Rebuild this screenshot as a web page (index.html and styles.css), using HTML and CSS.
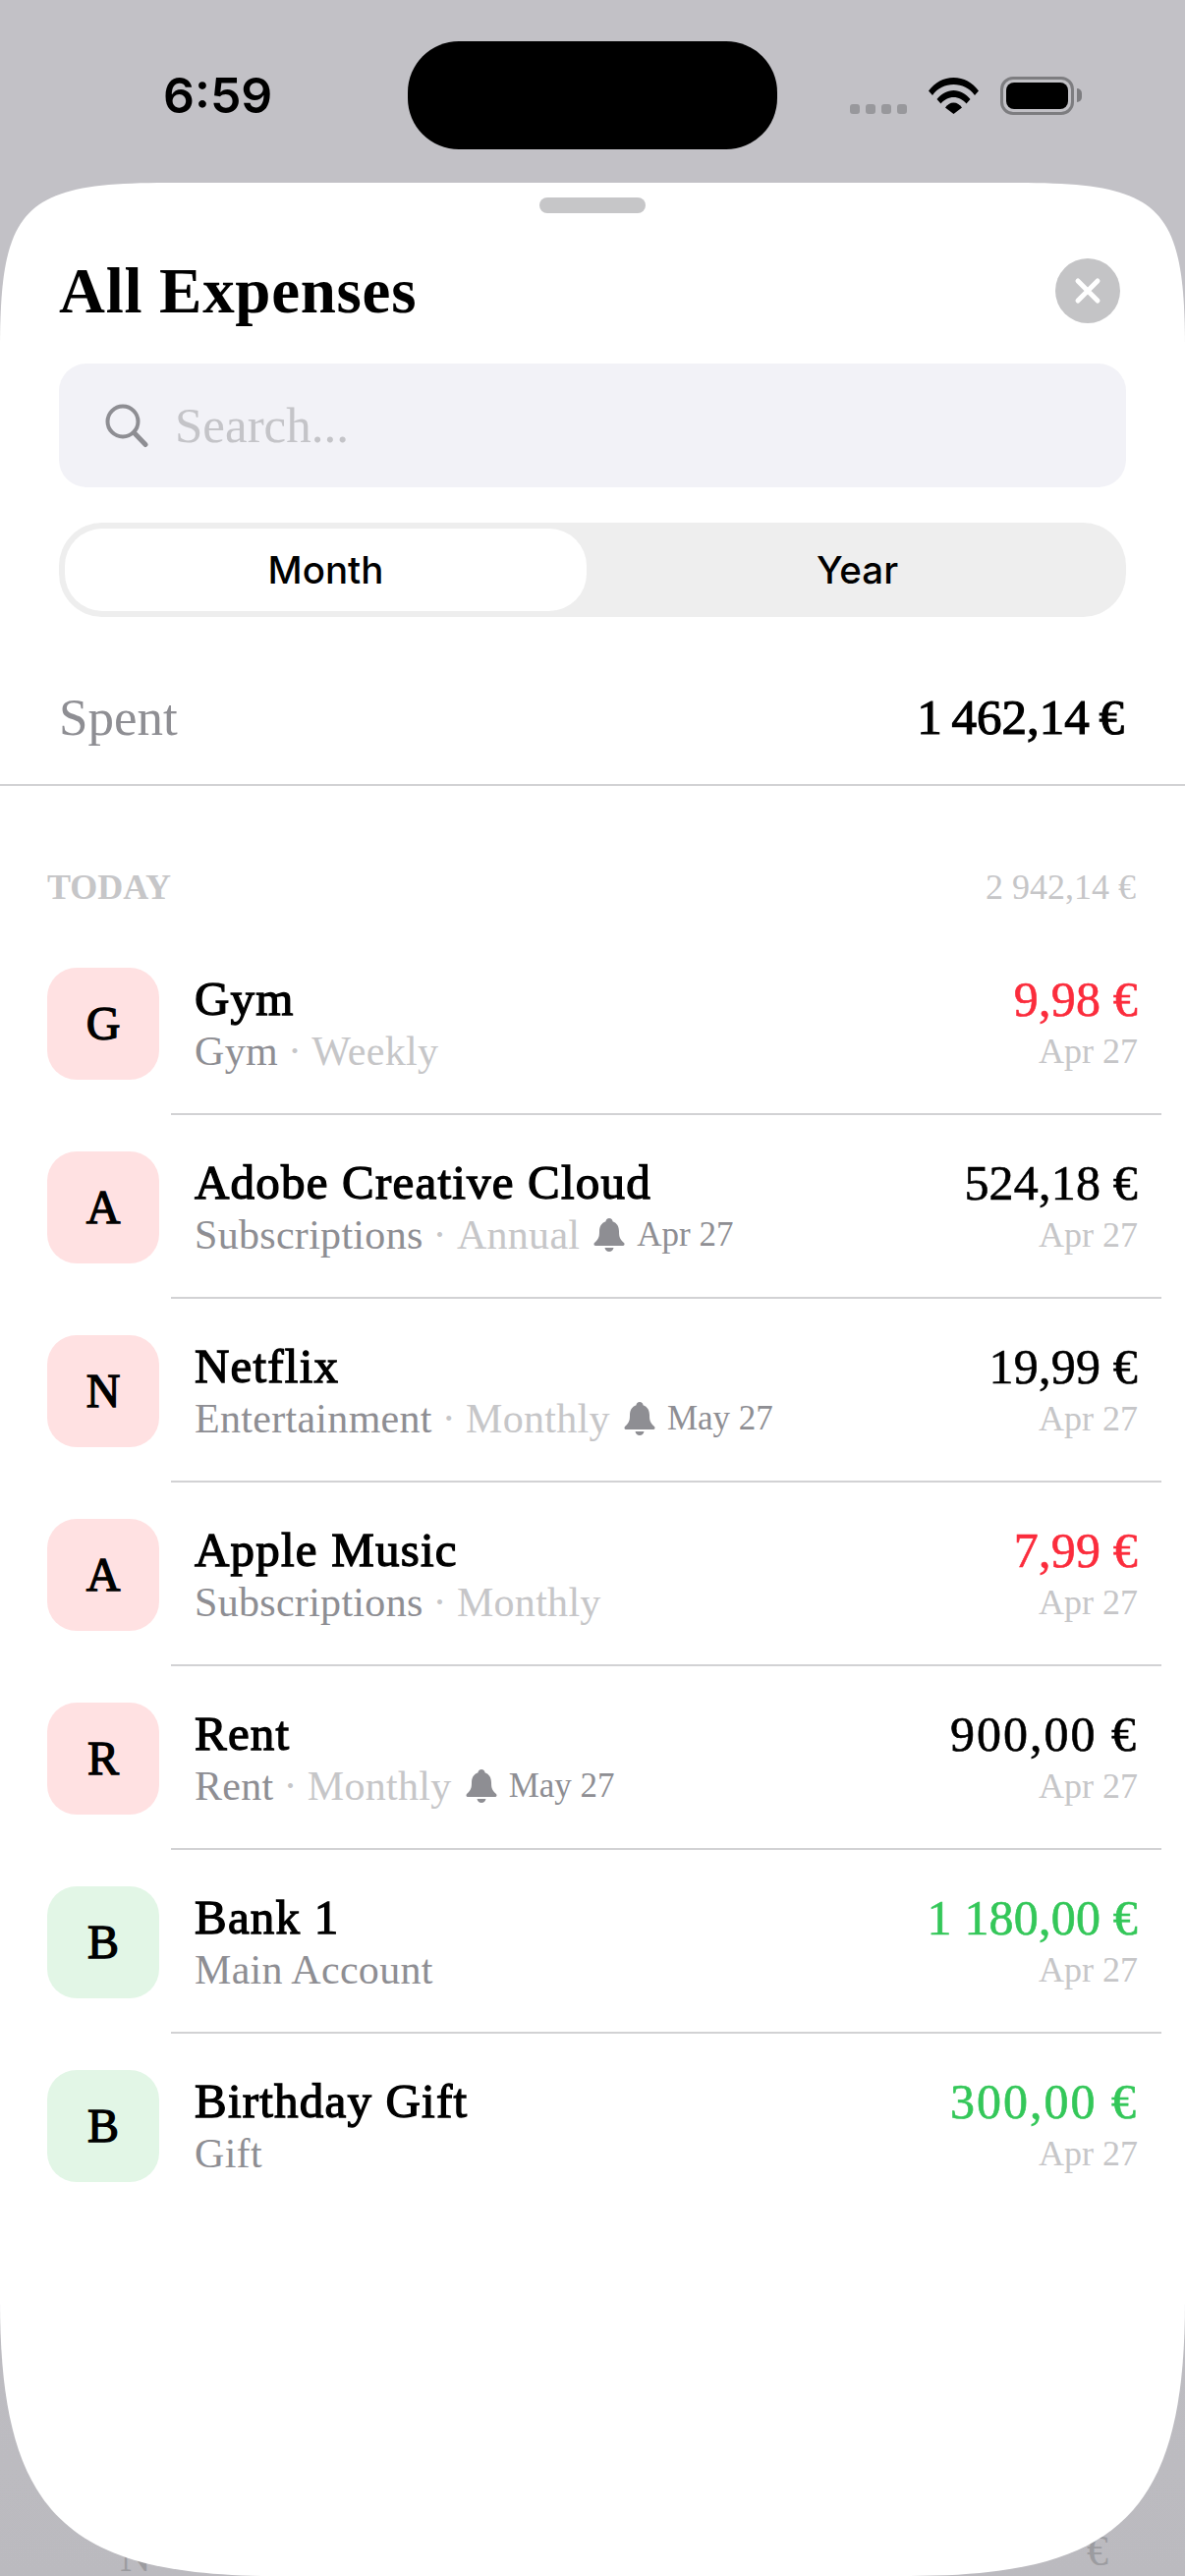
FILE: index.html
```html
<!DOCTYPE html>
<html lang="en">
<head>
  <meta charset="UTF-8">
  <title>All Expenses</title>
  <link rel="stylesheet" href="styles.css">
</head>
<body>
  <div class="page">

    <!-- what is left visible of the screen under the sheet -->
    <div class="ghost-row">
      <span>N</span>
      <span class="ghost-euro">€</span>
    </div>

    <div class="status-bar">
      <div class="status-time">6:59</div>
      <div class="island"></div>
      <div class="status-icons">
        <div class="signal"><i></i><i></i><i></i><i></i></div>
        <svg class="wifi" width="51" height="38" viewBox="0 0 51 38">
          <path d="M0 14.500C6.500 6 15 1 25.500 1S44.500 6 51 14.500L47 19C41.500 11.500 34 8 25.500 8S9.500 11.500 4 19Z"/>
          <path d="M8.500 23C13 17.500 19 14 25.500 14S38 17.500 42.500 23L38.500 27.500C35 23.500 30.500 21 25.500 21S16 23.500 12.500 27.500Z"/>
          <path d="M17 31.500C19 28.500 22 26.500 25.500 26.500S32 28.500 34 31.500L25.500 38Z"/>
        </svg>
        <div class="battery"><div class="battery-level"></div></div>
      </div>
    </div>

    <div class="sheet">
      <div class="handle"></div>

      <div class="sheet-header">
        <h1>All Expenses</h1>
        <div class="close-btn">
          <svg width="30" height="30" viewBox="0 0 30 30">
            <path d="M5 5L25 25M25 5L5 25" fill="none" stroke="#fff" stroke-width="5" stroke-linecap="round"/>
          </svg>
        </div>
      </div>

      <div class="search-box">
        <svg width="46" height="46" viewBox="0 0 46 46">
          <circle cx="19" cy="19" r="15.500" fill="none" stroke="#8e8e93" stroke-width="4"/>
          <path d="M30.500 30.500L42 42.500" fill="none" stroke="#8e8e93" stroke-width="5" stroke-linecap="round"/>
        </svg>
        <span>Search...</span>
      </div>

      <div class="segments">
        <div class="segment active">Month</div>
        <div class="segment year">Year</div>
      </div>

      <div class="spent-row">
        <span class="spent-label">Spent</span>
        <span class="spent-value">1 462,14 €</span>
      </div>

      <div class="day-header">
        <span class="day-name">TODAY</span>
        <span class="day-total">2 942,14 €</span>
      </div>

      <div class="row">
        <div class="letter pink">G</div>
        <div class="row-body">
          <div class="row-left">
            <div class="name">Gym</div>
            <div class="sub">Gym<span class="dot">·</span><span class="repeat">Weekly</span></div>
          </div>
          <div class="row-right">
            <div class="amount red">9,98 €</div>
            <div class="date">Apr 27</div>
          </div>
        </div>
      </div>

      <div class="row">
        <div class="letter pink">A</div>
        <div class="row-body">
          <div class="row-left">
            <div class="name">Adobe Creative Cloud</div>
            <div class="sub">Subscriptions<span class="dot">·</span><span class="repeat">Annual</span>
              <svg class="bell" width="32" height="34" viewBox="0 0 32 34"><path d="M16 0C18 0 19.500 1.500 19.500 3.200C24 4.800 26 8.500 26 13.500C26 19 27 21.500 31 25C32 26 31.500 28 30 28H2C.5 28 0 26 1 25C5 21.500 6 19 6 13.500C6 8.500 8 4.800 12.500 3.200C12.500 1.500 14 0 16 0ZM11.500 30H20.500C20 32.500 18.200 34 16 34S12 32.500 11.500 30Z"/></svg>
              <span class="remind">Apr 27</span></div>
          </div>
          <div class="row-right">
            <div class="amount">524,18 €</div>
            <div class="date">Apr 27</div>
          </div>
        </div>
      </div>

      <div class="row">
        <div class="letter pink">N</div>
        <div class="row-body">
          <div class="row-left">
            <div class="name">Netflix</div>
            <div class="sub">Entertainment<span class="dot">·</span><span class="repeat">Monthly</span>
              <svg class="bell" width="32" height="34" viewBox="0 0 32 34"><path d="M16 0C18 0 19.500 1.500 19.500 3.200C24 4.800 26 8.500 26 13.500C26 19 27 21.500 31 25C32 26 31.500 28 30 28H2C.5 28 0 26 1 25C5 21.500 6 19 6 13.500C6 8.500 8 4.800 12.500 3.200C12.500 1.500 14 0 16 0ZM11.500 30H20.500C20 32.500 18.200 34 16 34S12 32.500 11.500 30Z"/></svg>
              <span class="remind">May 27</span></div>
          </div>
          <div class="row-right">
            <div class="amount">19,99 €</div>
            <div class="date">Apr 27</div>
          </div>
        </div>
      </div>

      <div class="row">
        <div class="letter pink">A</div>
        <div class="row-body">
          <div class="row-left">
            <div class="name">Apple Music</div>
            <div class="sub">Subscriptions<span class="dot">·</span><span class="repeat">Monthly</span></div>
          </div>
          <div class="row-right">
            <div class="amount red">7,99 €</div>
            <div class="date">Apr 27</div>
          </div>
        </div>
      </div>

      <div class="row">
        <div class="letter pink">R</div>
        <div class="row-body">
          <div class="row-left">
            <div class="name">Rent</div>
            <div class="sub">Rent<span class="dot">·</span><span class="repeat">Monthly</span>
              <svg class="bell" width="32" height="34" viewBox="0 0 32 34"><path d="M16 0C18 0 19.500 1.500 19.500 3.200C24 4.800 26 8.500 26 13.500C26 19 27 21.500 31 25C32 26 31.500 28 30 28H2C.5 28 0 26 1 25C5 21.500 6 19 6 13.500C6 8.500 8 4.800 12.500 3.200C12.500 1.500 14 0 16 0ZM11.500 30H20.500C20 32.500 18.200 34 16 34S12 32.500 11.500 30Z"/></svg>
              <span class="remind">May 27</span></div>
          </div>
          <div class="row-right">
            <div class="amount wide">900,00 €</div>
            <div class="date">Apr 27</div>
          </div>
        </div>
      </div>

      <div class="row">
        <div class="letter mint">B</div>
        <div class="row-body">
          <div class="row-left">
            <div class="name">Bank 1</div>
            <div class="sub">Main Account</div>
          </div>
          <div class="row-right">
            <div class="amount green">1 180,00 €</div>
            <div class="date">Apr 27</div>
          </div>
        </div>
      </div>

      <div class="row last">
        <div class="letter mint">B</div>
        <div class="row-body">
          <div class="row-left">
            <div class="name">Birthday Gift</div>
            <div class="sub">Gift</div>
          </div>
          <div class="row-right">
            <div class="amount green wide">300,00 €</div>
            <div class="date">Apr 27</div>
          </div>
        </div>
      </div>
    </div>
  </div>
</body>
</html>
```

FILE: styles.css
```css
* {
  box-sizing: border-box;
}
body {
  margin: 0;
  font-family: "Liberation Serif", serif;
  color: #000;
  background: #c2c1c6;
}
.page {
  position: relative;
  width: 1206px;
  height: 2622px;
  overflow: hidden;
  background: linear-gradient(#c2c1c6 0, #c2c1c6 70%, #bbbabf 100%);
}
.ghost-row {
  position: absolute;
  left: 122px;
  right: 78px;
  bottom: -6px;
  display: flex;
  justify-content: space-between;
  font-size: 44px;
  color: #9c9ca0;
}
.ghost-euro {
  position: relative;
  top: -6px;
}

/* status bar */
.status-bar {
  display: flex;
  height: 186px;
}
.status-time {
  width: 415px;
  padding: 69px 0 0 166px;
  font-family: "Inter", sans-serif;
  font-weight: 600;
  font-size: 50px;
  line-height: 56px;
}
.island {
  width: 376px;
  height: 110px;
  margin-top: 42px;
  background: #000;
  border-radius: 52px;
}
.status-icons {
  display: flex;
  align-items: flex-start;
  padding: 78px 0 0 74px;
}
.signal {
  display: flex;
  gap: 6px;
  margin-top: 28px;
}
.signal i {
  width: 10px;
  height: 10px;
  background: #98989c;
  border-radius: 3px;
}
.wifi {
  margin-left: 22px;
}
.battery {
  position: relative;
  width: 75px;
  height: 39px;
  margin-left: 22px;
  padding: 3px;
  border: 3px solid #7d7d80;
  border-radius: 13px;
}
.battery::after {
  content: "";
  position: absolute;
  left: 75px;
  top: 9px;
  width: 5px;
  height: 14px;
  background: #7d7d80;
  border-radius: 0 6px 6px 0;
}
.battery-level {
  height: 100%;
  background: #000;
  border-radius: 8px;
}

/* sheet */
.sheet {
  position: relative;
  height: 2436px;
  background: #fff;
  clip-path: path("M170 0H1036C1182 0 1206 24 1206 170V2156C1206 2370 1140 2436 926 2436H280C66 2436 0 2370 0 2156V170C0 24 24 0 170 0Z");
}
.handle {
  width: 108px;
  height: 16px;
  margin: 0 auto;
  position: relative;
  top: 15px;
  background: #c6c6c8;
  border-radius: 8px;
}
.sheet-header {
  display: flex;
  justify-content: space-between;
  align-items: center;
  height: 66px;
  margin-top: 61px;
  padding: 0 66px 0 60px;
}
h1 {
  margin: 0;
  font-size: 65px;
  font-weight: 700;
  line-height: 66px;
  letter-spacing: 0.7px;
}
.close-btn {
  display: flex;
  align-items: center;
  justify-content: center;
  width: 66px;
  height: 66px;
  background: #c4c4c6;
  border-radius: 50%;
}
.search-box {
  display: flex;
  align-items: center;
  gap: 26px;
  height: 126px;
  margin: 41px 60px 0;
  padding: 0 0 0 46px;
  background: #f2f2f7;
  border-radius: 28px;
  font-size: 51px;
  color: #c4c4c8;
}
.segments {
  display: flex;
  height: 96px;
  margin: 36px 60px 0;
  padding: 6px;
  background: #eeeeee;
  border-radius: 44px;
}
.segment {
  display: flex;
  align-items: center;
  justify-content: center;
  flex: 1;
  font-family: "Inter", sans-serif;
  font-weight: 500;
  font-size: 38.500px;
}
.segment.active {
  flex: 0 0 531px;
  background: #fff;
  border-radius: 38px;
}
.segment.year {
  padding-left: 8px;
}
.spent-row {
  display: flex;
  justify-content: space-between;
  align-items: center;
  height: 172px;
  padding: 34px 62px 0 60px;
  border-bottom: 2px solid #d2d2d4;
}
.spent-label {
  font-size: 53px;
  color: #8e8e93;
}
.spent-value {
  font-size: 51px;
  word-spacing: -3px;
  -webkit-text-stroke: 1.2px #000;
}
.day-header {
  display: flex;
  justify-content: space-between;
  align-items: center;
  height: 44px;
  margin-top: 81px;
  padding: 0 50px 0 48px;
  font-size: 36px;
  color: #c6c6c8;
}
.day-name {
  font-weight: 700;
}

/* rows */
.row {
  display: flex;
  height: 187px;
  padding: 0 24px 0 48px;
}
.day-header + .row {
  margin-top: 23px;
}
.letter {
  display: flex;
  align-items: center;
  justify-content: center;
  flex: 0 0 114px;
  height: 114px;
  margin-top: 37px;
  padding-bottom: 2px;
  border-radius: 30px;
  font-size: 48px;
  -webkit-text-stroke: 1.3px #000;
}
.pink {
  background: #ffe1e2;
}
.mint {
  background: #e2f6e6;
}
.row-body {
  display: flex;
  justify-content: space-between;
  flex: 1;
  margin-left: 12px;
  padding: 41px 24px 0 24px;
  border-bottom: 2px solid #d2d2d4;
}
.row.last .row-body {
  border-bottom: none;
}
.name {
  font-size: 49px;
  line-height: 56px;
  letter-spacing: 1.2px;
  -webkit-text-stroke: 1.3px #000;
}
.sub {
  display: flex;
  align-items: center;
  margin-top: -2px;
  font-size: 42px;
  line-height: 54px;
  letter-spacing: 0.3px;
  color: #8e8e93;
}
.dot {
  margin: 0 10px;
  color: #c6c6c8;
}
.repeat {
  color: #c6c6c8;
}
.bell {
  margin: 0 12px 0 14px;
  fill: #8e8e93;
}
.remind {
  font-size: 35px;
  letter-spacing: 0;
}
.row-right {
  text-align: right;
}
.amount {
  font-size: 50px;
  line-height: 56px;
  letter-spacing: 0.2px;
  -webkit-text-stroke: 0.6px currentColor;
}
.amount.wide {
  letter-spacing: 2px;
}
.date {
  margin-top: -2px;
  font-size: 36px;
  line-height: 54px;
  color: #c6c6c8;
}
.red {
  color: #fb2c3c;
}
.green {
  color: #34c759;
}
```
